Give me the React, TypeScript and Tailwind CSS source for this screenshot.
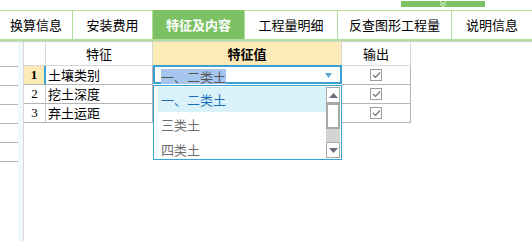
import React from 'react';

const tabs = [
  { label: '换算信息', w: 'w-[73px]' },
  { label: '安装费用', w: 'w-[80px]' },
  { label: '特征及内容', w: 'w-[92px]', active: true },
  { label: '工程量明细', w: 'w-[93px]' },
  { label: '反查图形工程量', w: 'w-[114px]' },
  { label: '说明信息', w: 'flex-1' },
];

const rows = [
  { no: '1', name: '土壤类别', selected: true },
  { no: '2', name: '挖土深度' },
  { no: '3', name: '弃土运距' },
];

const Check = () => (
  <div className="w-[12px] h-[12px] border border-[#9c9c9c] bg-white flex items-center justify-center">
    <svg width="9" height="8" viewBox="0 0 9 8">
      <path d="M1 4 L3.5 6.5 L8 1.5" fill="none" stroke="#70707c" strokeWidth="1.2" />
    </svg>
  </div>
);

const Arrow = ({ up }: { up?: boolean }) => (
  <svg width="9" height="5" viewBox="0 0 9 5">
    <polygon points={up ? '0,5 9,5 4.5,0' : '0,0 9,0 4.5,5'} fill="#6a6a78" />
  </svg>
);

export default function App() {
  return (
    <div className="w-[532px] h-[241px] bg-white overflow-hidden text-[13px] text-black font-['Noto_Sans_CJK_SC',sans-serif] flex flex-col">
      {/* collapse handle */}
      <div className="h-[10px] pl-[401px] pt-[1px]">
        <div className="w-[84px] h-[6px] bg-[#7dc265] flex justify-center">
          <svg width="8" height="6" viewBox="0 0 8 6">
            <path d="M1 0.5 L4 3 L7 0.5 M1 3 L4 5.5 L7 3" fill="none" stroke="#e9f6e2" strokeWidth="1" />
          </svg>
        </div>
      </div>

      {/* tab bar */}
      <div className="h-[31px] flex border-t border-b-2 border-[#b1df9a]">
        {tabs.map(t => (
          <div
            key={t.label}
            className={`${t.w} flex items-center justify-center border-r border-[#b1df9a] last:border-r-0 ${
              t.active ? 'bg-[#7cc164] text-white font-bold -mt-px' : 'text-black'
            }`}
          >
            {t.label}
          </div>
        ))}
      </div>

      {/* body */}
      <div className="flex flex-1 border-t border-[#d2d2d2]">
        <div className="w-[18px] flex flex-col">
          <div className="h-[25px] border-b border-[#b4b4b4]" />
          {[0, 1, 2, 3, 4].map(i => (
            <div key={i} className="h-[19px] border-b border-[#b4b4b4]" />
          ))}
        </div>
        <div className="w-[5px] bg-[#eef9fc]" />
        <div className="w-px bg-[#d6d6d6]" />

        <div className="relative">
          <div className="grid grid-cols-[22px_107px_189px_69px]">
            <div className="h-[24px] border-r border-b border-[#d6d6d6]" />
            <div className="h-[24px] border-r border-b border-[#d6d6d6] flex items-center justify-center">特征</div>
            <div className="h-[24px] border-r border-b border-[#d6d6d6] bg-[#fdebb7] flex items-center justify-center font-bold">特征值</div>
            <div className="h-[24px] border-r border-b border-[#d6d6d6] flex items-center justify-center">输出</div>

            {rows.map(r => (
              <React.Fragment key={r.no}>
                <div
                  className={`h-[19px] border-b border-[#b4b4b4] flex items-center justify-center font-['Liberation_Serif',serif] text-[13px] ${
                    r.selected ? 'bg-[#fdebb7] font-bold border-r-2 border-r-[#3aa2d2]' : 'border-r border-r-[#c8c8c8]'
                  }`}
                >
                  {r.no}
                </div>
                <div className="h-[19px] border-r border-b border-[#b4b4b4] flex items-center pl-[2px]">{r.name}</div>
                {r.selected ? (
                  <div className="h-[19px] border-2 border-t-[2px] border-[#3aa2d2] -mt-px flex items-center pl-[6px] pr-[8px] relative">
                    <span className="bg-[#a6c6ef] text-[#555] leading-[15px] mt-[3px]">一、二类土</span>
                    <div className="flex-1" />
                    <svg className="mt-px" width="7" height="5" viewBox="0 0 7 5">
                      <polygon points="0,0 7,0 3.5,5" fill="#5aa7d8" />
                    </svg>
                  </div>
                ) : (
                  <div className="h-[19px] border-r border-b border-[#b4b4b4]" />
                )}
                <div className="h-[19px] border-r border-b border-[#b4b4b4] flex items-center justify-center">
                  <Check />
                </div>
              </React.Fragment>
            ))}
          </div>

          {/* dropdown list */}
          <div className="absolute left-[129px] top-[43px] w-[189px] h-[75px] bg-white border border-[#3aa2d2] flex overflow-hidden">
            <div className="flex-1 pl-[4px] pt-px">
              <div className="h-[25px] bg-[#d9f2fa] text-[#1a70b8] flex items-center pl-[3px]">一、二类土</div>
              <div className="h-[25px] text-[#6e6e6e] flex items-center pl-[3px]">三类土</div>
              <div className="h-[25px] text-[#6e6e6e] flex items-center pl-[3px]">四类土</div>
            </div>
            <div className="w-[15px] flex flex-col pt-px pb-px pr-px">
              <div className="h-[16px] bg-white border border-[#a8a8a8] flex items-center justify-center">
                <Arrow up />
              </div>
              <div className="h-[26px] bg-white border-2 border-[#a8a8a8]" />
              <div className="flex-1 bg-[#d4d4d4]" />
              <div className="h-[16px] bg-white border border-[#a8a8a8] flex items-center justify-center">
                <Arrow />
              </div>
            </div>
          </div>
        </div>
      </div>
    </div>
  );
}
